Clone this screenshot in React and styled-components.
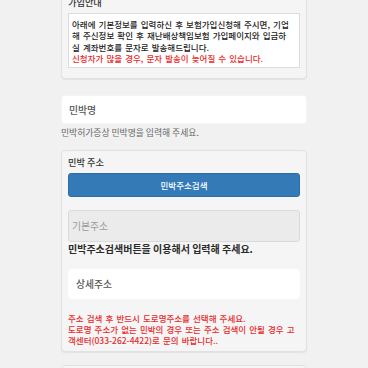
import React from "react";
import styled, { createGlobalStyle } from "styled-components";

const Global = createGlobalStyle`
  html, body { margin: 0; padding: 0; background: #f1f1f1; }
  body {
    font-family: "Noto Sans CJK KR", "Noto Sans", "Liberation Sans", sans-serif;
    color: #333;
    overflow: hidden;
  }
  * { box-sizing: border-box; }
`;

const Page = styled.div`
  width: 246px;
  margin: -10px auto 0;
  display: flex;
  flex-direction: column;
`;

const Well = styled.section`
  background: #f5f5f5;
  border: 1px solid #e1e1e1;
  border-radius: 4px;
  box-shadow: 0 1px 1px rgba(0, 0, 0, 0.06);
  padding: 5px 6px ${(p) => p.$pb || 6}px;
  display: flex;
  flex-direction: column;
`;

const Label = styled.div`
  font-size: 9.2px;
  line-height: 12px;
  height: 12px;
  font-weight: 500;
  color: #333;
  margin-bottom: 5px;
  white-space: nowrap;
`;

const NoticeBox = styled.div`
  background: #fff;
  border: 1px solid #dcdcdc;
  padding: 5px 3px 3px;
  font-size: 8.5px;
  line-height: 11.3px;
  word-spacing: 1.2px;
  font-weight: 500;
  color: #222;
`;

const Line = styled.div`
  white-space: nowrap;
  color: ${(p) => (p.$red ? "#e8292b" : "inherit")};
`;

const Field = styled.div`
  height: ${(p) => p.$h}px;
  margin-top: ${(p) => p.$mt || 0}px;
  background: ${(p) => (p.$disabled ? "#ebebeb" : "#fff")};
  border: 1px solid ${(p) => (p.$disabled ? "#dadada" : p.$soft ? "#f4f4f4" : "#fff")};
  border-radius: 3px;
  display: flex;
  align-items: center;
  padding-left: ${(p) => p.$pl || 7}px;
  font-size: 9.8px;
  font-weight: ${(p) => (p.$disabled ? 400 : 500)};
  color: ${(p) => (p.$disabled ? "#9a9a9a" : "#555")};
  white-space: nowrap;
`;

const Help = styled.div`
  font-size: ${(p) => (p.$strong ? 10 : 8.8)}px;
  line-height: 12px;
  margin-top: ${(p) => p.$mt || 0}px;
  color: ${(p) => (p.$strong ? "#2b2b2b" : "#666")};
  font-weight: ${(p) => (p.$strong ? 700 : 400)};
  white-space: nowrap;
`;

const SearchButton = styled.button`
  height: 24px;
  width: 100%;
  border: 1px solid #2e6da4;
  border-radius: 3px;
  background: #337ab7;
  color: #fff;
  font-family: inherit;
  font-size: 8.5px;
  font-weight: 500;
  padding: 0;
  cursor: pointer;
`;

const RedNotes = styled.div`
  margin-top: 13.7px;
  font-size: 8.5px;
  line-height: 11.2px;
  word-spacing: 1.2px;
  font-weight: 500;
  color: #e8292b;
`;

const Spacer = styled.div`
  height: ${(p) => p.$h}px;
  flex: none;
`;

export default function App() {
  return (
    <>
      <Global />
      <Page>
        <Well $pb={10}>
          <Label>가입안내</Label>
          <NoticeBox>
            <Line>아래에 기본정보를 입력하신 후 보험가입신청해 주시면, 기업</Line>
            <Line>해 주신정보 확인 후 재난배상책임보험 가입페이지와 입금하</Line>
            <Line>실 계좌번호를 문자로 발송해드립니다.</Line>
            <Line $red>신청자가 많을 경우, 문자 발송이 늦어질 수 있습니다.</Line>
          </NoticeBox>
        </Well>

        <Field $h={29} $mt={16} $pl={7} $soft>민박명</Field>
        <Help $mt={3}>민박허가증상 민박명을 입력해 주세요.</Help>

        <Spacer $h={11} />
        <Well $pb={5}>
          <Label>민박 주소</Label>
          <SearchButton type="button">민박주소검색</SearchButton>
          <Field $h={32} $mt={13} $pl={3} $disabled>기본주소</Field>
          <Help $mt={1} $strong>민박주소검색버튼을 이용해서 입력해 주세요.</Help>
          <Field $h={30} $mt={14} $pl={7}>상세주소</Field>
          <RedNotes>
            <Line>주소 검색 후 반드시 도로명주소를 선택해 주세요.</Line>
            <Line>도로명 주소가 없는 민박의 경우 또는 주소 검색이 안될 경우 고</Line>
            <Line>객센터(033-262-4422)로 문의 바랍니다..</Line>
          </RedNotes>
        </Well>
        <Spacer $h={13} />
        <Well>
          <Label>&nbsp;</Label>
        </Well>
      </Page>
    </>
  );
}
